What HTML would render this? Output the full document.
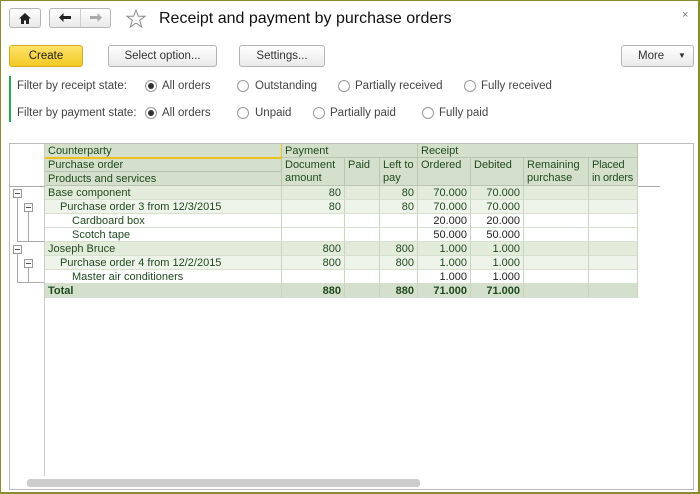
<!DOCTYPE html>
<html><head><meta charset="utf-8"><style>
*{box-sizing:border-box;margin:0;padding:0}
body{width:700px;height:494px;overflow:hidden;background:#fff;font-family:"Liberation Sans",Arial,sans-serif;font-size:11px;color:#333;position:relative}
.frame{position:absolute;left:0;top:0;width:700px;height:494px;border:1px solid #8b8a2c;border-width:1px 2px 2px 1px}
.a{position:absolute}
.btn{position:absolute;border:1px solid #b5b5b5;border-radius:3px;background:linear-gradient(#fff,#e9e9e9);text-align:center;color:#333;font-size:11.5px}
.radio{position:absolute;width:12px;height:12px;border:1px solid #999;border-radius:50%;background:#fff}
.radio.on::after{content:"";position:absolute;left:2px;top:2px;width:6px;height:6px;border-radius:50%;background:#333}
.lbl{position:absolute;font-size:11.5px;color:#444}
.c{position:absolute;height:14px;line-height:13px;padding:1px 3px 0;color:#1f4a1f;white-space:nowrap;overflow:hidden;border-right:1px solid #c9d5c0;border-bottom:1px solid #d6e0cf}
.h{background:#d5e0cc;border-color:#b9c4b2;padding:1px 2px 0 3px}
.r{text-align:right}
.b{font-weight:bold}
.tb{position:absolute;width:9px;height:9px;border:1px solid #999;background:#fff}
.tb::after{content:"";position:absolute;left:1px;top:3px;width:5px;height:1px;background:#555}
</style></head><body>
<div class="frame"></div>
<div class="btn" style="left:9px;top:8px;width:32px;height:20px"><svg width="12" height="11" viewBox="0 0 12 11" style="margin-top:4px"><path d="M6 0L0 5.5H2V11H5V7.5H7V11H10V5.5H12Z" fill="#222"/></svg></div>
<div class="btn" style="left:49px;top:8px;width:62px;height:20px"></div>
<div class="a" style="left:80px;top:9px;width:1px;height:18px;background:#ccc"></div>
<svg class="a" style="left:59px;top:13px" width="13" height="9" viewBox="0 0 13 9"><path d="M0 4.5L4.5 0V3H12V6H4.5V9Z" fill="#222"/></svg>
<svg class="a" style="left:89px;top:13px" width="13" height="9" viewBox="0 0 13 9"><path d="M13 4.5L8.5 0V3H1V6H8.5V9Z" fill="#aaa"/></svg>
<svg class="a" style="left:126px;top:9px" width="20" height="19" viewBox="0 0 20 19"><path d="M10 1L12.4 7.3H19L13.7 11.3L15.7 18L10 14L4.3 18L6.3 11.3L1 7.3H7.6Z" fill="none" stroke="#888" stroke-width="1"/></svg>
<div class="a" style="left:159px;top:10px;font-size:16px;color:#111">Receipt and payment by purchase orders</div>
<div class="a" style="left:682px;top:9px;font-size:11px;color:#777">×</div>
<div class="btn" style="left:9px;top:45px;width:74px;height:22px;background:linear-gradient(#fde26a,#f3c924);border-color:#d4ad1c;line-height:20px;color:#222">Create</div>
<div class="btn" style="left:108px;top:45px;width:109px;height:22px;line-height:20px">Select option...</div>
<div class="btn" style="left:239px;top:45px;width:86px;height:22px;line-height:20px">Settings...</div>
<div class="btn" style="left:621px;top:45px;width:73px;height:22px;line-height:20px;text-align:left;padding-left:16px">More<span style="position:absolute;left:56px;top:0;font-size:8px">▼</span></div>
<div class="a" style="left:9px;top:76px;width:2px;height:46px;background:#2aa654"></div>
<div class="lbl" style="left:17px;top:80px">Filter by receipt state:</div>
<div class="radio on" style="left:145px;top:80px"></div><div class="lbl" style="left:162px;top:80px">All orders</div>
<div class="radio" style="left:237px;top:80px"></div><div class="lbl" style="left:255px;top:80px">Outstanding</div>
<div class="radio" style="left:338px;top:80px"></div><div class="lbl" style="left:355px;top:80px">Partially received</div>
<div class="radio" style="left:464px;top:80px"></div><div class="lbl" style="left:481px;top:80px">Fully received</div>
<div class="lbl" style="left:17px;top:107px">Filter by payment state:</div>
<div class="radio on" style="left:145px;top:107px"></div><div class="lbl" style="left:162px;top:107px">All orders</div>
<div class="radio" style="left:237px;top:107px"></div><div class="lbl" style="left:255px;top:107px">Unpaid</div>
<div class="radio" style="left:313px;top:107px"></div><div class="lbl" style="left:330px;top:107px">Partially paid</div>
<div class="radio" style="left:422px;top:107px"></div><div class="lbl" style="left:439px;top:107px">Fully paid</div>
<div class="a" style="left:9px;top:143px;width:685px;height:347px;border:1px solid #bbb"></div>
<div class="a" style="left:44px;top:144px;width:1px;height:332px;background:#ccc"></div>
<div class="a" style="left:10px;top:186px;width:650px;height:1px;background:#aaa"></div>
<div class="a" style="left:27px;top:479px;width:393px;height:8px;background:#ccc;border-radius:3px"></div>
<div class="c h" style="left:45px;top:144px;width:237px">Counterparty</div>
<div class="c h" style="left:45px;top:158px;width:237px">Purchase order</div>
<div class="c h" style="left:45px;top:172px;width:237px">Products and services</div>
<div class="a" style="left:45px;top:157px;width:237px;height:2px;background:#f0c020"></div>
<div class="a" style="left:281px;top:144px;width:2px;height:14px;background:#f0c020"></div>
<div class="c h" style="left:282px;top:144px;width:136px">Payment</div>
<div class="c h" style="left:418px;top:144px;width:220px">Receipt</div>
<div class="c h" style="left:282px;top:158px;width:63px;height:28px;white-space:normal">Document amount</div>
<div class="c h" style="left:345px;top:158px;width:35px;height:28px">Paid</div>
<div class="c h" style="left:380px;top:158px;width:38px;height:28px;white-space:normal">Left to pay</div>
<div class="c h" style="left:418px;top:158px;width:53px;height:28px">Ordered</div>
<div class="c h" style="left:471px;top:158px;width:53px;height:28px">Debited</div>
<div class="c h" style="left:524px;top:158px;width:65px;height:28px;white-space:normal">Remaining purchase</div>
<div class="c h" style="left:589px;top:158px;width:49px;height:28px;white-space:normal;overflow:visible;letter-spacing:-0.2px">Placed<br>in orders</div>
<div class="tb" style="left:13px;top:189px"></div>
<div class="tb" style="left:24px;top:203px"></div>
<div class="tb" style="left:13px;top:245px"></div>
<div class="tb" style="left:24px;top:259px"></div>
<div class="a" style="left:17px;top:198px;width:1px;height:44px;background:#aaa"></div>
<div class="a" style="left:17px;top:241px;width:27px;height:1px;background:#aaa"></div>
<div class="a" style="left:28px;top:212px;width:1px;height:30px;background:#aaa"></div>
<div class="a" style="left:17px;top:254px;width:1px;height:29px;background:#aaa"></div>
<div class="a" style="left:17px;top:282px;width:27px;height:1px;background:#aaa"></div>
<div class="a" style="left:28px;top:268px;width:1px;height:14px;background:#aaa"></div>
<div id="rows"></div>
<script>
var cols=[[45,237],[282,63],[345,35],[380,38],[418,53],[471,53],[524,65],[589,49]];
var rows=[
["Base component","80","","80","70.000","70.000","","", "#e3ecdb",0,""],
["Purchase order 3 from 12/3/2015","80","","80","70.000","70.000","","","#eef4ea",12,""],
["Cardboard box","","","","20.000","20.000","","","#fff",24,""],
["Scotch tape","","","","50.000","50.000","","","#fff",24,""],
["Joseph Bruce","800","","800","1.000","1.000","","","#e3ecdb",0,""],
["Purchase order 4 from 12/2/2015","800","","800","1.000","1.000","","","#eef4ea",12,""],
["Master air conditioners","","","","1.000","1.000","","","#fff",24,""],
["Total","880","","880","71.000","71.000","","","#d5e0cc",0,"b"]];
var h="";
rows.forEach(function(r,i){var y=186+i*14;
cols.forEach(function(c,j){var s=j==0?"padding-left:"+(3+r[9])+"px;":"";
h+='<div class="c '+(j?'r ':'')+r[10]+'" style="left:'+c[0]+'px;top:'+y+'px;width:'+c[1]+'px;background:'+r[8]+';'+(j>=4&&r[8]=="#fff"&&r[j]?'color:#222;':'')+s+'">'+r[j]+'</div>';});});
document.getElementById("rows").innerHTML=h;
</script>
</body></html>
